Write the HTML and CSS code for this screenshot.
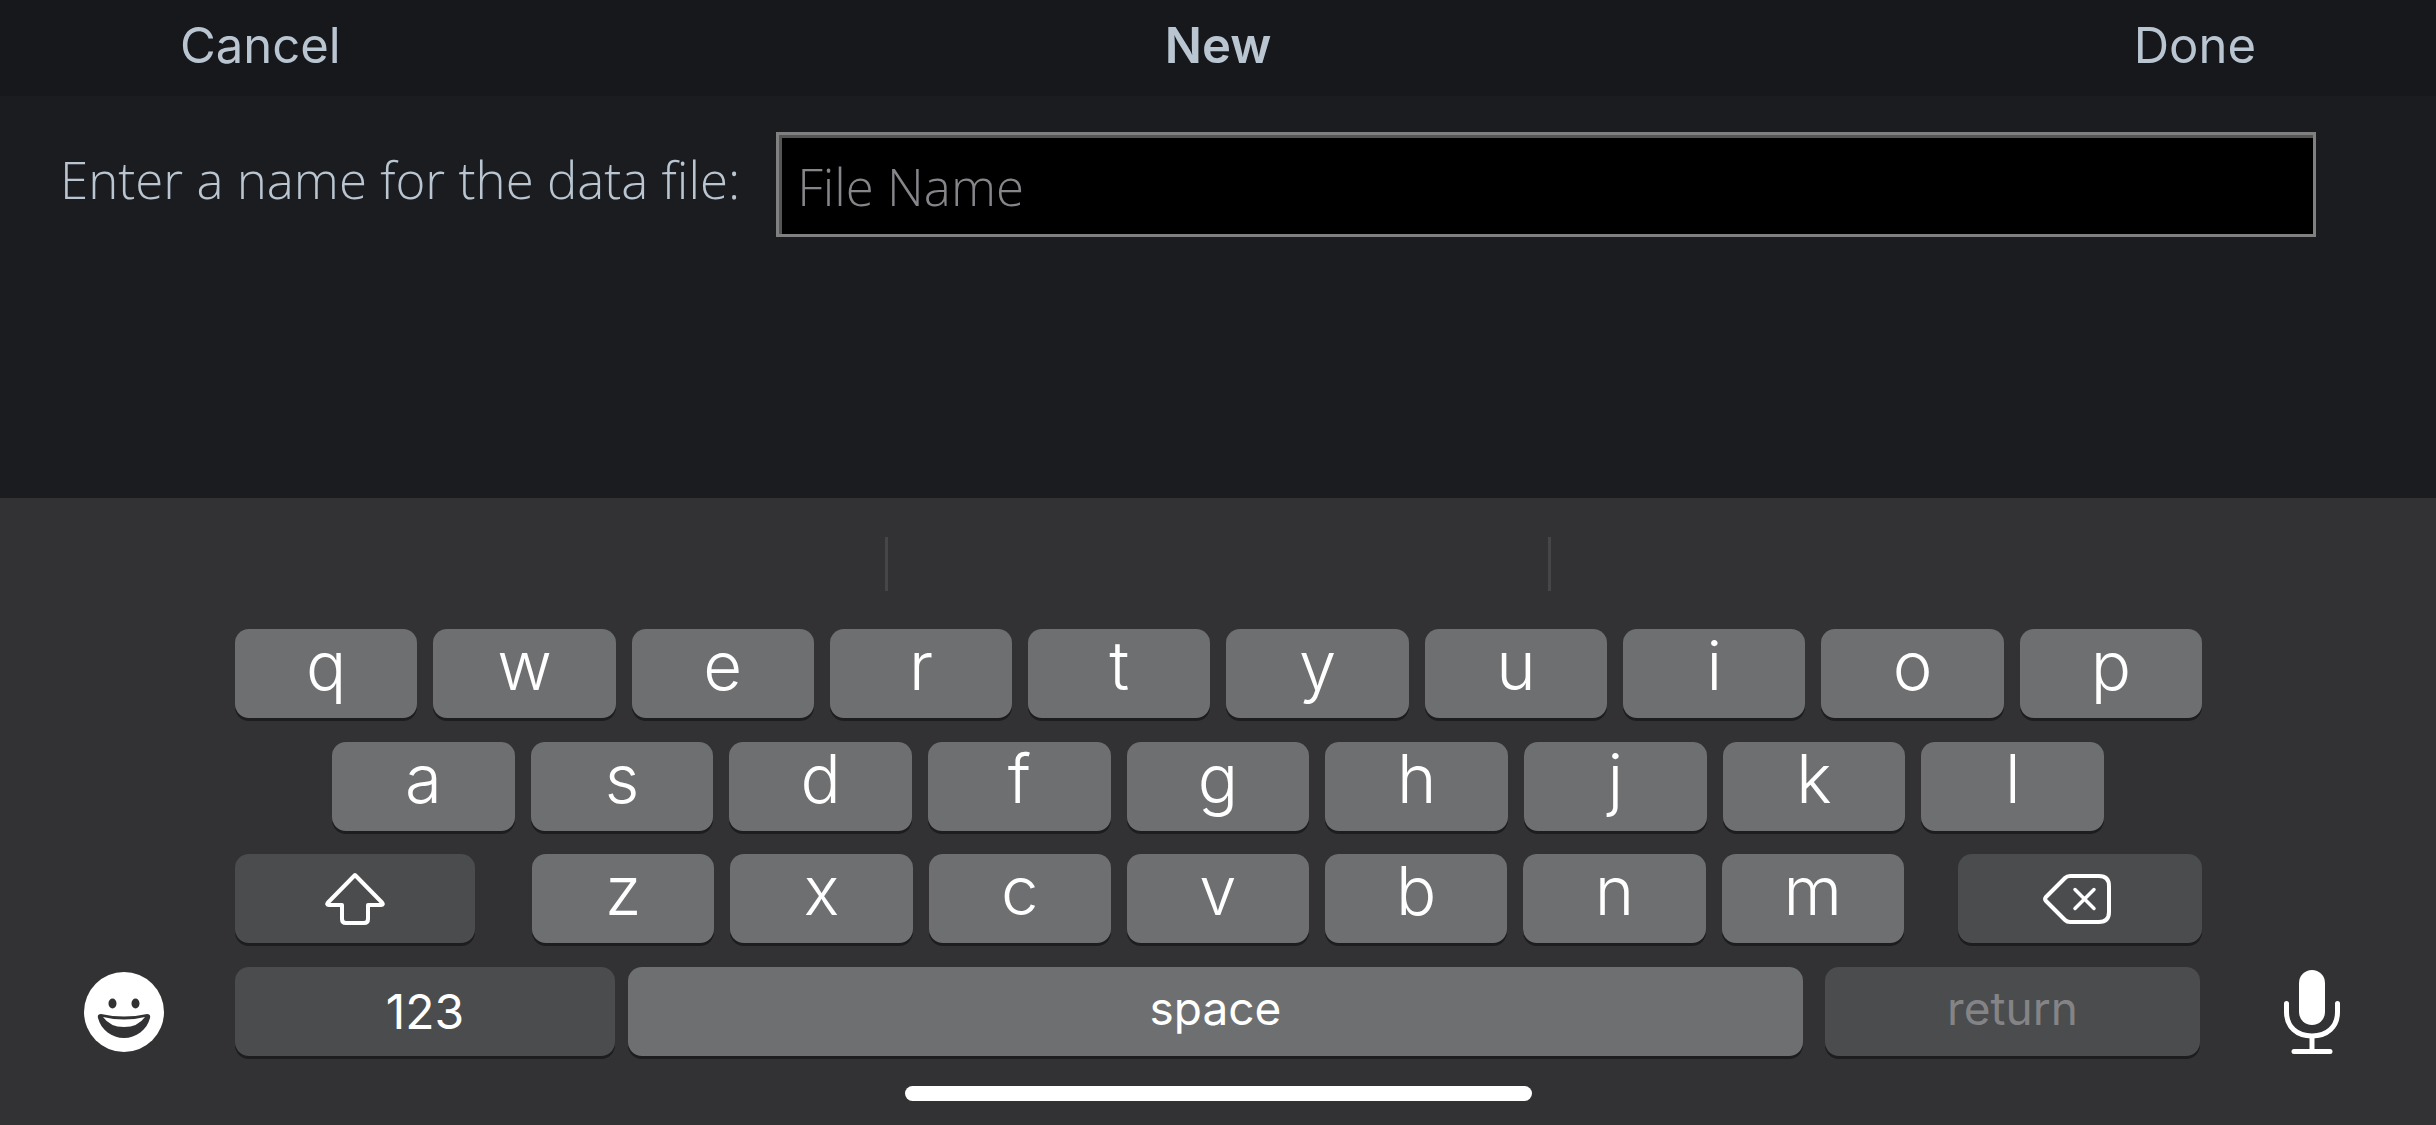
FILE: index.html
```html
<!DOCTYPE html>
<html lang="en">
<head>
    <meta charset="UTF-8">
    <meta name="viewport" content="width=device-width, initial-scale=1.0">
    <title>New</title>
    <link rel="stylesheet" href="styles.css">
</head>
<body>

<header class="navbar">
    <button type="button" class="nav-button">Cancel</button>
    <h1>New</h1>
    <button type="button" class="nav-button done">Done</button>
</header>

<main class="form-container">
    <form id="newFileForm" class="form-group">
        <label for="fileName">Enter a name for the data file:</label>
        <input type="text" id="fileName" name="fileName" placeholder="File Name">
    </form>
</main>

<section class="keyboard">
    <div class="suggestions">
        <span></span>
        <span></span>
        <span></span>
    </div>
    <div class="row">
        <button type="button" class="key">q</button>
        <button type="button" class="key">w</button>
        <button type="button" class="key">e</button>
        <button type="button" class="key">r</button>
        <button type="button" class="key">t</button>
        <button type="button" class="key">y</button>
        <button type="button" class="key">u</button>
        <button type="button" class="key">i</button>
        <button type="button" class="key">o</button>
        <button type="button" class="key">p</button>
    </div>
    <div class="row row-middle">
        <button type="button" class="key">a</button>
        <button type="button" class="key">s</button>
        <button type="button" class="key">d</button>
        <button type="button" class="key">f</button>
        <button type="button" class="key">g</button>
        <button type="button" class="key">h</button>
        <button type="button" class="key">j</button>
        <button type="button" class="key">k</button>
        <button type="button" class="key">l</button>
    </div>
    <div class="row">
        <button type="button" class="key dark shift" aria-label="Shift">
            <svg width="60" height="54" viewBox="0 0 60 54" fill="none" stroke="#fff" stroke-width="4" stroke-linejoin="round">
                <path d="M30 3 L57 30.500 Q59 33 56 33 H43 V47 Q43 51 39 51 H21 Q17 51 17 47 V33 H4 Q1 33 3 30.500 Z"/>
            </svg>
        </button>
        <button type="button" class="key">z</button>
        <button type="button" class="key">x</button>
        <button type="button" class="key">c</button>
        <button type="button" class="key">v</button>
        <button type="button" class="key">b</button>
        <button type="button" class="key">n</button>
        <button type="button" class="key">m</button>
        <button type="button" class="key dark delete" aria-label="Delete">
            <svg width="68" height="50" viewBox="0 0 68 50" fill="none" stroke="#fff" stroke-width="4" stroke-linejoin="round" stroke-linecap="round">
                <path d="M27 2 H56 Q66 2 66 12 V38 Q66 48 56 48 H27 Q24 48 22 46 L3 27 Q1 25 3 23 L22 4 Q24 2 27 2 Z"/>
                <path d="M32 15.500 L51 34.500 M51 15.500 L32 34.500" stroke-width="3.500"/>
            </svg>
        </button>
    </div>
    <div class="row-bottom">
        <button type="button" class="icon-button" aria-label="Emoji">
            <svg width="80" height="80" viewBox="0 0 80 80">
                <circle cx="40" cy="40" r="40" fill="#fff"/>
                <ellipse cx="28.500" cy="31.500" rx="4" ry="5" fill="#323234"/>
                <ellipse cx="51.500" cy="31.500" rx="4" ry="5" fill="#323234"/>
                <path d="M17 42 Q40 47 63 42 Q67 42 66 46 C63 58 52 66 40 66 C28 66 17 58 14 46 Q13 42 17 42 Z" fill="#323234"/>
                <path d="M19 45 Q40 50 61 45 Q54 55 40 55 Q26 55 19 45 Z" fill="#fff"/>
            </svg>
        </button>
        <div class="bottom-keys">
            <button type="button" class="key dark word numbers">123</button>
            <button type="button" class="key word space">space</button>
            <button type="button" class="key dark word return" disabled>return</button>
        </div>
        <button type="button" class="icon-button" aria-label="Dictate">
            <svg width="56" height="84" viewBox="0 0 56 84" fill="none" stroke="#fff" stroke-linecap="round">
                <rect x="15" y="0" width="26" height="55" rx="13" fill="#fff" stroke="none"/>
                <path d="M2.500 33.500 V42 C2.500 57 13 66 28 66 C43 66 53.500 57 53.500 42 V33.500" stroke-width="5"/>
                <path d="M28 67 V81 M10 81.500 H46" stroke-width="5"/>
            </svg>
        </button>
    </div>
    <div class="home-bar"></div>
</section>

</body>
</html>
```

FILE: styles.css
```css
* {
    box-sizing: border-box;
}
body {
    margin: 0;
    min-height: 100vh;
    display: flex;
    flex-direction: column;
    font-family: Inter, "Liberation Sans", sans-serif;
    background-color: #1b1c20;
    color: #b9c5d1;
}
button {
    margin: 0;
    padding: 0;
    border: none;
    background: none;
    font-family: inherit;
    color: inherit;
    cursor: pointer;
}
.navbar {
    display: grid;
    grid-template-columns: 1fr auto 1fr;
    align-items: center;
    height: 96px;
    padding: 0 180px;
    background-color: #17181c;
}
.navbar h1, .nav-button {
    margin: 0;
    padding-bottom: 5px;
    font-size: 49px;
    line-height: 91px;
}
.navbar h1 {
    font-weight: 600;
}
.nav-button {
    justify-self: start;
}
.done {
    justify-self: end;
}
.form-container {
    flex: 1;
    padding: 36px 120px 0 60px;
}
.form-group {
    display: flex;
    align-items: center;
    gap: 36px;
    font-family: "Open Sans", "Noto Sans", sans-serif;
    font-size: 51px;
    font-weight: 300;
}
label {
    padding-bottom: 12px;
}
input {
    flex: 1;
    min-width: 0;
    height: 105px;
    padding: 2px 18px 0 18px;
    border: 3px solid #808080;
    border-radius: 0;
    box-shadow: inset 3px 3px 0 #555;
    background-color: #000;
    font: inherit;
    color: #b9c5d1;
    outline: none;
}
input::placeholder {
    color: #85858a;
    opacity: 1;
}
.keyboard {
    background-color: #323234;
    color: #fff;
    padding-bottom: 24px;
}
.suggestions {
    display: grid;
    grid-template-columns: repeat(3, 660px);
    justify-content: center;
    gap: 3px;
    height: 131px;
    padding: 39px 0 38px;
}
.suggestions span + span {
    border-left: 3px solid #464648;
    margin-left: -3px;
}
.row, .row-bottom {
    display: flex;
    gap: 16px;
    padding: 0 234px 0 235px;
    margin-bottom: 24px;
}
.row-middle {
    padding: 0 332px;
    margin-bottom: 23px;
}
.key {
    flex: 1 1 0;
    height: 89px;
    padding-bottom: 16px;
    border-radius: 14px;
    background-color: #6e6f71;
    box-shadow: 0 3px 0 #1d1d1f;
    font-size: 67px;
    line-height: 73px;
    font-weight: 350;
}
.dark {
    background-color: #4b4c4e;
}
.shift, .delete {
    flex: none;
    padding: 0;
}
.shift {
    width: 240px;
    margin-right: 41px;
}
.delete {
    width: 244px;
    margin-left: 38px;
    padding-right: 6px;
}
.shift svg, .delete svg {
    display: block;
    margin: 0 auto;
}
.word {
    font-size: 46px;
    font-weight: 400;
    padding-bottom: 6px;
}
.row-bottom {
    align-items: center;
    justify-content: space-between;
    gap: 0;
    padding: 0 96px 0 84px;
    margin-bottom: 30px;
}
.bottom-keys {
    flex: 1;
    display: flex;
    margin: 0 84px 0 71px;
}
.numbers {
    flex: none;
    width: 380px;
    margin-right: 13px;
    padding-bottom: 0;
    font-size: 48px;
}
.return {
    flex: none;
    width: 375px;
    margin-left: 22px;
    color: #848486;
}
.icon-button svg {
    display: block;
}
.home-bar {
    width: 627px;
    height: 15px;
    margin: 0 auto;
    border-radius: 8px;
    background-color: #fff;
}
```
